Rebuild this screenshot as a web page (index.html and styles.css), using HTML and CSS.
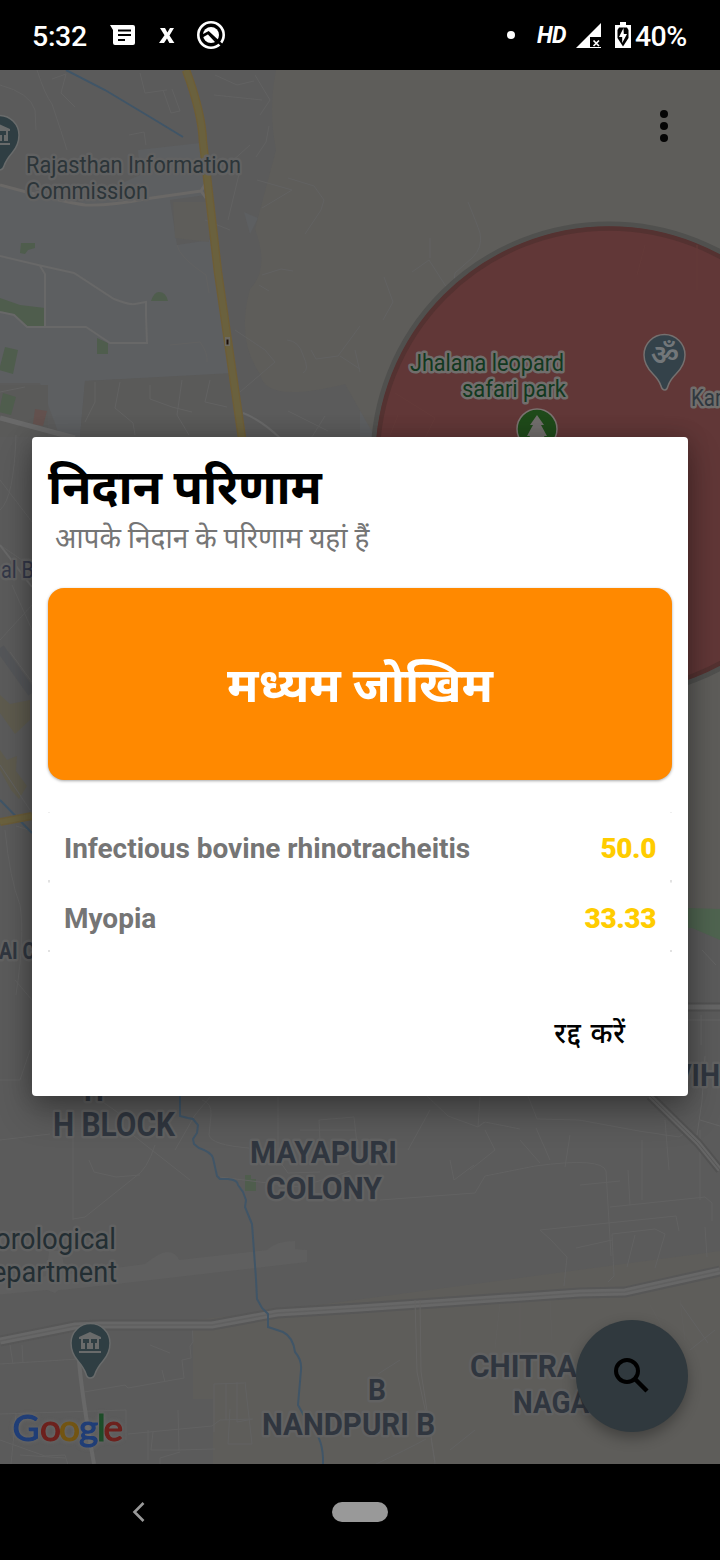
FILE: index.html
```html
<!DOCTYPE html>
<html lang="hi">
<head>
<meta charset="utf-8">
<title>निदान परिणाम</title>
<link rel="stylesheet" href="styles.css">
</head>
<body>
<div class="phone">
  <header class="status">
    <div class="status-left">
      <span class="clock">5:32</span>
      <svg class="ic-msg" width="26" height="22" viewBox="0 0 26 22"><path fill="#fff" fill-rule="evenodd" d="M0 0h23q2 0 2 2v16q0 2-2 2H5q-2 0-2-2V5zM8 4.500v2h13v-2zM8 9v2h13V9zM8 14v2h7v-2z"/></svg>
      <svg class="ic-x" width="16" height="16" viewBox="0 0 16 16"><path fill="#fff" d="M1 0h5l2.400 4.500L11 0h4l-4.500 7.600L15.400 15h-5L8 10.500 5 15H0l5.500-7.800z"/></svg>
      <svg class="ic-q" width="28" height="28" viewBox="0 0 28 28"><circle cx="14" cy="14" r="12.700" fill="none" stroke="#fff" stroke-width="2.600"/><circle cx="14" cy="14" r="8" fill="#fff"/><path d="M4.500 15.500L11.500 11.500 27 26" fill="none" stroke="#000" stroke-width="2.600"/><path d="M11.500 13l7.500 8" stroke="#000" stroke-width="1.500"/></svg>
    </div>
    <div class="status-right">
      <span class="dot"></span>
      <span class="hd">HD</span>
      <svg class="ic-signal" width="25" height="25" viewBox="0 0 25 25"><path d="M0 25L25 0v25z" fill="#fff"/><path d="M14 14h11v10H14z" fill="#000"/><path d="M17.500 17.500l5.500 5.500M23 17.500l-5.500 5.500" stroke="#fff" stroke-width="1.700"/></svg>
      <svg class="ic-bat" width="16" height="26" viewBox="0 0 16 26"><path d="M5 0h6v3h5v23H0V3h5z" fill="#fff"/><path d="M4 5.500h8L13.500 8v8L8 24.500 2.500 16V8z" fill="#000"/><path d="M8.500 6L4 15h3.200v6L12 12H8.800z" fill="#fff"/></svg>
      <span class="pct">40%</span>
    </div>
  </header>

  <main class="screen">
    <svg class="map" viewBox="0 70 720 1394" width="720" height="1394">
      <rect x="0" y="70" width="720" height="1394" fill="#5b5b5b"/>
      <!-- districts -->
      <g fill="#5d5f61">
        <path d="M0 185L80 202 140 175 138 150 200 143 206 195 170 200 177 245 210 240 232 374 85 381 80 437H60L40 383H0z"/>
        <path d="M360 310l30 30-15 97h-15zM244 212l14 6-8 16z"/>
        <path d="M562 1414l18 6 30 30-20-1zM520 1435l28 5-2 18-26-6z"/>
      </g>
      <g fill="#5e5d5a">
        <path d="M276 150q-8-40 0-80h444v850H688V437H375l-30-53q-80 20-85-10-24-34-10-85 20-20 5-60z"/>
        <path d="M175 238l34 4v-40h-36zM193 1320l80-9 447-60v213H213v-65h-20z"/>
      </g>
      <path d="M0 385h48v52H0zM85 381l148-8 12 64H80z" fill="#5a5a59"/>
      <!-- parks -->
      <g fill="#4f5d4d">
        <path d="M21 243h14v5l-7 2-3 4-5-1zM0 298l20 7 25 3v18H27l-13-12-14-2zM151 301q3-9 8-9 7 0 9 9zM97 338l11 5v11H97zM5 347l13 3-5 24-14-4zM3 393l13 4-5 18-12-3zM245 1175h6v4h5v12h-11z"/>
      </g>
      <path d="M688 908l32 1v31l-28-12h-4z" fill="#4f6450"/>
      <path d="M35 409l12 2-4 15-10-2z" fill="#63514e"/>
      <path d="M0 695l10 9 20-4v20l-15 14-15-21zM0 750l7 10 10-4-1 15 11 15-8 13-8-9-11-20z" fill="#5e5b4e"/>
      <!-- airfield -->
      <path d="M115 1268l30-4q15-12 22-12 9 0 12 8l88-10q9-9 28-9v8l12 1v12l-190 22q-45 5-58 6l-4 3-8-3-51 5v-11l50-8 3-25h12l5 23z" fill="#5f5f5f"/>
      <!-- minor roads -->
      <g fill="none" stroke="#626262" stroke-width="1">
        <path d="M37 70q8 25 15 34 10 30 15 46M52 79l14-5-5 19 14 14M0 85q30 8 35 25l1 20M129 135l15-3 2 13M140 73l5 20 22-3M163 90l8 23 9-2-8-22M255 75l15 25-10 15M205 165l25-2 20-18M205 220l25 10M240 170l-12 50M215 75l22 10 17-4M214 95l48 5M288 178l26 8 10 14-3 10-16 24M257 180l35 10-30 18M256 157l10-15 3-16"/>
        <path d="M177 245q2 12 29 30l3 18M262 275l19-6 12 2M259 285l10 6M235 330l30 20 10 12-35 30M287 340q12 1 16 15 7 15 0 18M311 350l5 9 22-3 22-30M355 350l5 22M340 356l20 13M325 416l-25 40M288 411l40 20M0 392l25-5M150 385v14l22 8 20 5M95 382v20l-10 20M120 382l-5 26 18 15 2 12M182 380l-5 35 12 20M210 380l-5 22 22 5M170 345l30-3q8 11 7 20"/>
        <path d="M468 202q9 22 12 31 3 15-8 25l-17 15-2 18-16 20M412 272l17-12 16 25 20 18 13 14M430 258v-20M383 320l10-18-9-25"/>
        <path d="M0 640l32-35M10 652l22 30M12 585L32 630M0 510q14-12 16-75M0 480l32 42M0 545l32 22M16 826l16 5M0 765l30 45M5 830q5 50 15 75 5 30-4 90M15 980l17 20M0 1080h20l10-30M210 1097l-15 18-20 35M202 1100q10 3 9 15l-2 20q2 10 40 13M278 1097v62l10 14 32-1M319 1120l35-3 5 45M300 1130h55M319 1120l2 40M73 1220v-90M89 1160l5 12 22 5 24-2M155 1145q-8 25-20 32l-50 40-12 2M100 1100l50 35M120 1125l70 55M0 1140l50-6M220 1177l80 10 50-16"/>
        <path d="M427 1096l21 20 30 11 7-5 35 7M480 1097l-2 30 6-5M528 1096l9 23 42 1 60 11 40 6 7-5M536 1128l14 32M485 1130l10 20-25 20M380 1200l95-7 10-17 50-10q67-9 71 5l5 85M540 1230l11 10 16 17-3 29M540 1230l136-14 3 15M610 1207l95-10 7 6v18M612 1234l43-5 10 5M576 1248l36-8M612 1234l2 42-6 6M628 1170l2 35M642 1140v60M665 1120l4 50M700 1130v70M430 1110l-22 40M450 1160l4 20 20-15M520 1140l20 23M570 1135l-5 32M580 1185l40-4M635 1235l-8 32M665 1234l-10 34M705 1227l2 30"/>
        <path d="M0 1364l78-5M10 1345l3 19M22 1345l1 18M84 1392l41-7 3 3 56-10-2-18 9-2-1-12 3-4-1-18M86 1408l-1-6M0 1414l126-4v30M0 1440l45 16 20-1 3 10M11 1464l5-50M128 1434l84-8 8-6 32-1M153 1432l-2 18h28l-1-40M178 1450l37-1M214 1384v48M226 1384v36M237 1382v40l16-3M245 1382l7 62h-24l2-35M214 1384l30-1M160 1464v-6l20-6M150 1345l20 8M162 1370l3 12M20 1455l45 3M148 1460v-30M376 1464q30-14 50-25M431 1438l4 26M400 1360l-22 14M450 1450l25-20M680 1303l28 40M690 1350l25-20"/>
        <path d="M500 1303l-5 45M520 1300v45M550 1300l2 40M680 1300l5 40M650 1305l28 50" stroke="#605f5d"/>
      </g>
      <g fill="none" stroke="#686868" stroke-width="2">
        <path d="M0 256l38 9 36 8 40 26q15 6 21 5l11-2v13l1 28h-37l-24-16H27l-13-12-14-3M40 266l5 8v52"/>
        <path d="M243 413q18 7 37 25M0 545l32 42"/>
        <path d="M79 1361q3 35 15 103" stroke-width="4"/>
      </g>
      <path d="M0 185l30 8q40 10 55 12 25 1 60-6l56-8M201 191l5-8M201 191l5 7" fill="none" stroke="#6a6866" stroke-width="3"/>
      <path d="M0 418l75 20" fill="none" stroke="#696969" stroke-width="5"/>
      <path d="M0 648l32 45" fill="none" stroke="#545659" stroke-width="9"/>
      <g fill="none">
        <path d="M0 1341l75-15 25-1h112l65-12 83-5 220-15 45-1 95-21" stroke="#575757" stroke-width="11"/>
        <path d="M0 1341l75-15 25-1h112l65-12 83-5 220-15 45-1 95-21" stroke="#676767" stroke-width="7"/>
        <path d="M0 1341l75-15 25-1h112l65-12 83-5 220-15 45-1 95-21" stroke="#606060" stroke-width="1.500"/>
        <path d="M415 1300l2 72 14 65M420 1300l1 72 14 90" stroke="#656463" stroke-width="1"/>
        <path d="M650 1096l48 47 22 27M688 1007h32" stroke="#525252" stroke-width="9"/>
        <path d="M650 1096l48 47 22 27M688 1007h32" stroke="#656565" stroke-width="5"/>
        <path d="M650 1096l48 47 22 27" stroke="#585858" stroke-width="1"/>
        <path d="M697 1135l5-34 3-45M700 1120l20 6M688 1020h32M701 1015v30M702 950l14 15" stroke="#646464"/>
      </g>
      <!-- water -->
      <g fill="none" stroke="#405567" stroke-width="2">
        <path d="M66 70l39 20 50 30 28 17"/>
        <path d="M0 800l32 33"/>
        <path d="M180 1096v20l8 2 5 1 5 6-1 8-4 6 1 5 5 4q12 4 14 10l4 18 3 3h8q10 1 10 6l5 7 3 8-1 7 7 17 4 55 1 20 5 9 6 6v13l15 5q10 5 12 20 7 8 6 18l-3 35 10 18q14 12 15 35v14"/>
      </g>
      <!-- highway -->
      <path d="M186 70q16 43 17 72l6 52 9 78 26 180" fill="none" stroke="#6e5d35" stroke-width="8.500"/>
      <path d="M186 70q16 43 17 72l6 52 9 78 26 180" fill="none" stroke="#6a613e" stroke-width="6"/>
      <path d="M0 822l32-6" fill="none" stroke="#6a5c38" stroke-width="8"/>
      <path d="M0 822l32-6" fill="none" stroke="#6a613e" stroke-width="5"/>
      <rect x="225" y="337" width="5" height="9" fill="#6c6960"/><rect x="226.500" y="339.500" width="2" height="5" fill="#1a0e08"/>
      <!-- risk zone -->
      <circle cx="609" cy="460" r="234" fill="#613737"/>
      <circle cx="609" cy="460" r="236" fill="none" stroke="#50504e" stroke-width="5"/>
      <circle cx="609" cy="460" r="231.500" fill="none" stroke="#543231" stroke-width="4.500"/>
      <path d="M645 245l-8 30M697 245v45M395 393l40 25-10 20M398 415l-8 20" fill="none" stroke="#643a39"/>

      <g class="lbl">
        <text x="26" y="173" font-size="23" fill="#2c3539" textLength="215" lengthAdjust="spacingAndGlyphs">Rajasthan Information</text>
        <text x="26" y="199" font-size="23" fill="#2c3539" textLength="122" lengthAdjust="spacingAndGlyphs">Commission</text>
        <text x="410" y="371" font-size="23" fill="#12391f" class="halo-strong" textLength="154" lengthAdjust="spacingAndGlyphs">Jhalana leopard</text>
        <text x="462" y="397" font-size="23" fill="#12391f" class="halo-strong" textLength="104" lengthAdjust="spacingAndGlyphs">safari park</text>
        <text x="691" y="406" font-size="23" fill="#2f383f" class="halo-strong" textLength="31" lengthAdjust="spacingAndGlyphs">Kar</text>
        <text x="1" y="578" font-size="23" fill="#333748" textLength="33" lengthAdjust="spacingAndGlyphs">al B</text>
        <text x="-5" y="1249" font-size="29" fill="#232e33" textLength="121" lengthAdjust="spacingAndGlyphs">orological</text>
        <text x="-8" y="1282" font-size="29" fill="#232e33" textLength="125" lengthAdjust="spacingAndGlyphs">epartment</text>
      </g>
      <g class="lbl area">
        <text x="-1" y="959" font-size="23" textLength="50" lengthAdjust="spacingAndGlyphs">AI CH</text>
        <text x="84" y="1101" font-size="28">H</text>
        <text x="53" y="1136" font-size="33" textLength="122" lengthAdjust="spacingAndGlyphs">H BLOCK</text>
        <text x="250" y="1163" font-size="32" textLength="147" lengthAdjust="spacingAndGlyphs">MAYAPURI</text>
        <text x="266" y="1199" font-size="32" textLength="116" lengthAdjust="spacingAndGlyphs">COLONY</text>
        <text x="673" y="1086" font-size="32" textLength="47" lengthAdjust="spacingAndGlyphs">VIH</text>
        <text x="368" y="1400" font-size="30" textLength="18" lengthAdjust="spacingAndGlyphs">B</text>
        <text x="262" y="1435" font-size="32" textLength="173" lengthAdjust="spacingAndGlyphs">NANDPURI B</text>
        <text x="470" y="1377" font-size="32" textLength="107" lengthAdjust="spacingAndGlyphs">CHITRA</text>
        <text x="513" y="1413" font-size="32" textLength="94" lengthAdjust="spacingAndGlyphs">NAGAR</text>
      </g>

      <defs>
        <g id="museum">
          <path d="M0 36q-3 0-4-4-2-6-8-13-7-8-7-18a19.500 19.500 0 0 1 39 0q0 10-7 18-6 7-8 13-1 4-5 4z" fill="#2f3e43" stroke="#696b6b" stroke-width="1.500"/>
          <path d="M-11-5L0-10 11-5v2H9V7H-9V-3h-2zM-11 9h22v2h-22z" fill="#696b6b"/>
          <path d="M-7-3h6v4h-2v6h-2V1h-2zM1-3h6v4H5v6H3V1H1z" fill="#2f3e43"/>
        </g>
      </defs>
      <use href="#museum" x="90" y="1342"/>
      <use href="#museum" x="-1" y="134"/>
      <path d="M665 390q-3 0-4-4-2-6-8-12-9-9-9-19a20.500 20.500 0 0 1 41 0q0 10-9 19-6 6-8 12-1 4-3 4z" fill="#34424a" stroke="#75706f" stroke-width="1.500"/>
      <text class="om" x="665" y="365" text-anchor="middle">ॐ</text>
      <circle cx="537" cy="429" r="20" fill="#1f4a1a" stroke="#7b7270" stroke-width="1.500"/>
      <path d="M537 415l7 10h-3l6 11h-3l4 8h-22l4-8h-3l6-11h-3z" fill="#716e6c"/>

      <g class="google">
        <text y="1441"><tspan class="g-blue" x="12.500">G</tspan><tspan class="g-red" x="40">o</tspan><tspan class="g-yellow" x="59">o</tspan><tspan class="g-blue" x="79">g</tspan><tspan class="g-green" x="97">l</tspan><tspan class="g-red" x="103.500">e</tspan></text>
      </g>
    </svg>
    <svg class="more" width="10" height="34" viewBox="0 0 10 34"><g fill="#050505"><circle cx="5" cy="5" r="4"/><circle cx="5" cy="17" r="4"/><circle cx="5" cy="29" r="4"/></g></svg>
    <div class="fab"><svg width="36" height="36" viewBox="0 0 36 36"><circle cx="14" cy="14" r="11" fill="none" stroke="#000" stroke-width="4"/><path d="M21.500 21.500L34 34" stroke="#000" stroke-width="4.500"/></svg></div>

    <section class="dialog">
      <h1 class="title">निदान परिणाम</h1>
      <p class="sub">आपके निदान के परिणाम यहां हैं</p>
      <div class="risk"><span>मध्यम जोखिम</span></div>
      <ul class="results">
        <li class="row"><span>Infectious bovine rhinotracheitis</span><b>50.0</b></li>
        <li class="row"><span>Myopia</span><b>33.33</b></li>
      </ul>
      <div class="actions"><span class="cancel">रद्द करें</span></div>
    </section>
  </main>

  <nav class="nav">
    <svg class="back" width="14" height="20" viewBox="0 0 14 20"><path d="M11.500 1L2.500 10l9 9" fill="none" stroke="#999" stroke-width="2.600"/></svg>
    <span class="pill"></span>
  </nav>
</div>
</body>
</html>
```
FILE: styles.css
```css
* { box-sizing: border-box; }
body { margin: 0; background: #000; font-family: Roboto, "Noto Sans Devanagari", "Noto Sans", sans-serif; }
.phone { width: 720px; height: 1560px; display: flex; flex-direction: column; overflow: hidden; }

.status { height: 70px; flex: none; display: flex; justify-content: space-between; padding: 0 33px 0 32px; color: #fff; }
.status-left, .status-right { display: flex; align-items: center; }
.clock { font-size: 28.5px; font-weight: 500; width: 55px; margin-right: 23px; margin-top: 2px; letter-spacing: -.3px; }
.ic-msg { margin-top: 2px; }
.ic-x { margin-left: 23px; margin-top: 2px; }
.ic-q { margin-left: 22px; }
.dot { width: 8px; height: 8px; border-radius: 50%; background: #fff; margin-right: 22px; }
.hd { font-size: 23px; font-weight: 700; font-style: italic; width: 31px; margin-right: 8px; letter-spacing: -.8px; }
.ic-signal { margin-right: 14px; }
.ic-bat { margin-right: 4px; }
.pct { font-size: 28.5px; font-weight: 500; margin-top: 2px; width: 52px; letter-spacing: -.6px; }

.screen { position: relative; height: 1394px; flex: none; overflow: hidden; padding: 367px 32px 0; }
.map { position: absolute; left: 0; top: 0; }
.more { position: absolute; left: 659px; top: 39px; }
.fab { position: absolute; left: 576px; top: 1250px; width: 112px; height: 112px; border-radius: 50%; background: #30393e; box-shadow: 0 6px 14px rgba(0,0,0,.3); display: flex; align-items: center; justify-content: center; padding-right: 2px; padding-bottom: 2px; }

.lbl text { font-family: Roboto, sans-serif; paint-order: stroke; stroke: #626262; stroke-width: 5px; stroke-linejoin: round; }
.lbl .halo-strong { stroke: #716e6c; stroke-width: 5px; }
.area text { font-weight: 700; fill: #30363f; }
.om { font-family: "Noto Sans Devanagari", "Noto Sans", sans-serif; font-size: 29px; font-weight: 600; fill: #73777a; }
.google { filter: drop-shadow(0 0 2px #6c6c6c); }
.google text { font-family: Lato, sans-serif; font-size: 37px; font-weight: 400; stroke-width: 1.1px; }
.g-blue { fill: #203e77; stroke: #203e77; }
.g-red { fill: #6d211d; stroke: #6d211d; }
.g-yellow { fill: #735513; stroke: #735513; }
.g-green { fill: #1e4d29; stroke: #1e4d29; }

.dialog { position: relative; width: 656px; height: 659px; background: #fff; border-radius: 4px; padding: 20px 16px 0; box-shadow: 0 16px 34px rgba(0,0,0,.3), 0 0 22px rgba(0,0,0,.2); }
.title { margin: 0; height: 62px; line-height: 62px; font-size: 48px; font-weight: 700; color: #000; white-space: nowrap; letter-spacing: -.16px; }
.sub { margin: 0 0 0 -1px; height: 40px; line-height: 40px; padding-left: 8px; font-size: 28px; color: #757575; white-space: nowrap; letter-spacing: -.03px; }
.risk { margin-top: 29px; height: 192px; border-radius: 16px; background: #ff8900; color: #fff; font-size: 48.300px; font-weight: 700; display: flex; align-items: center; justify-content: center; padding-top: 11px; box-shadow: 0 1px 3px rgba(0,0,0,.35); }
.results { list-style: none; margin: 32px 0 0; padding: 0; }
.row { height: 70px; padding: 2px 16px 0; display: flex; align-items: center; justify-content: space-between; font-size: 28px; font-weight: 700; color: #757575;
  background: linear-gradient(#e2e2e2, #e2e2e2) left bottom / 2px 2px no-repeat, linear-gradient(#e2e2e2, #e2e2e2) right bottom / 2px 2px no-repeat, linear-gradient(#efefef, #efefef) left top / 2px 1px no-repeat, linear-gradient(#efefef, #efefef) right top / 2px 1px no-repeat; }
.row b { color: #fc0; letter-spacing: -.4px; }
.row span { letter-spacing: -.02px; }
.actions { display: flex; justify-content: flex-end; padding: 62px 46px 0 0; }
.cancel { font-size: 28px; line-height: 40px; color: #000; font-weight: 500; white-space: nowrap; letter-spacing: .9px; word-spacing: 1px; }

.nav { height: 96px; flex: none; background: #000; display: flex; align-items: center; padding-left: 132px; }
.pill { width: 56px; height: 20px; border-radius: 10px; background: #999; margin-left: 186px; }
```
